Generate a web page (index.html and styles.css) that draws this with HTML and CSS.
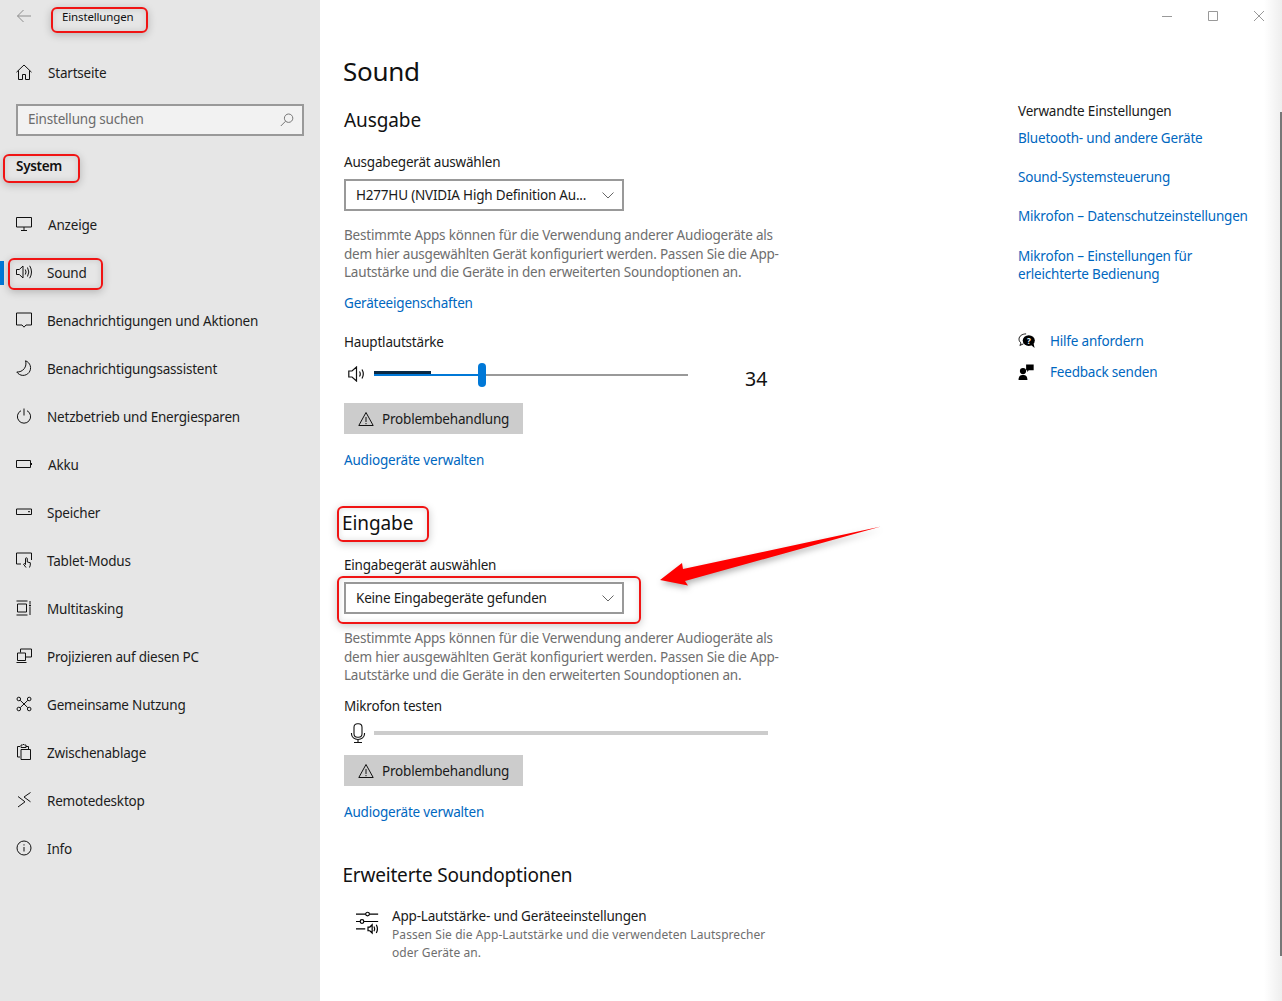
FILE: index.html
```html
<!DOCTYPE html>
<html lang="de">
<head>
<meta charset="utf-8">
<title>Einstellungen - Sound</title>
<link rel="stylesheet" href="styles.css">
</head>
<body>
<div class="window">
  <aside class="sidebar">
    <div class="titlebar">
      <svg class="back" width="16" height="16" viewBox="0 0 16 16"><path d="M15 8H1.500M7.500 2 1.500 8l6 6"/></svg>
      <span class="apptitle">Einstellungen</span>
    </div>
    <div class="row home">
      <svg class="ico" viewBox="0 0 16 16"><path d="M.5 8.200 8 1l7.500 7.200M2.500 6.500v9h4v-5h3v5h4v-9"/></svg>
      <span class="lbl wide">Startseite</span>
    </div>
    <div class="search">
      <span class="search-text">Einstellung suchen</span>
      <svg class="search-ico" viewBox="0 0 14 14"><circle cx="8.600" cy="5.200" r="4.200"/><path d="M5.600 8.200.8 13"/></svg>
    </div>
    <div class="group">System</div>
    <nav class="nav">
      <div class="row">
        <svg class="ico" viewBox="0 0 16 16"><path d="M.5 1.500h15v9.500H.5zM8 11v3M5 14.500h6"/></svg>
        <span class="lbl wide">Anzeige</span>
      </div>
      <div class="row active">
        <svg class="ico" viewBox="0 0 16 16"><path d="M.5 5.500h2.800L7 2v12l-3.700-3.500H.5zM9.300 5.500q1.500 2.500 0 5M11.500 3.500q2.600 4.500 0 9M13.700 1.800q3.600 6.200 0 12.400"/></svg>
        <span class="lbl">Sound</span>
      </div>
      <div class="row">
        <svg class="ico" viewBox="0 0 16 16"><path d="M.5 1h15v12H10l-2 2.200L6 13H.5z"/></svg>
        <span class="lbl">Benachrichtigungen und Aktionen</span>
      </div>
      <div class="row">
        <svg class="ico" viewBox="0 0 16 16"><path d="M9.500.8A7.500 7.500 0 1 1 .8 12 8.500 8.500 0 0 0 9.500.8z"/></svg>
        <span class="lbl">Benachrichtigungsassistent</span>
      </div>
      <div class="row">
        <svg class="ico" viewBox="0 0 16 16"><path d="M8 .5v7M5 2.700a6.600 6.600 0 1 0 6 0"/></svg>
        <span class="lbl">Netzbetrieb und Energiesparen</span>
      </div>
      <div class="row">
        <svg class="ico" viewBox="0 0 16 16"><path d="M.5 4.500h14v7H.5zM15.500 7v2"/></svg>
        <span class="lbl wide">Akku</span>
      </div>
      <div class="row">
        <svg class="ico" viewBox="0 0 16 16"><path d="M.5 5h15v5.500H.5zM12 7.700h2"/></svg>
        <span class="lbl">Speicher</span>
      </div>
      <div class="row">
        <svg class="ico" viewBox="0 0 16 16"><path d="M5 12H.5V1h15v7M10 15.500l-2.500-3.300 1-.7 1 1V6.700a.9.9 0 0 1 1.800 0V10l3 .7v2.500l-.8 2.300"/></svg>
        <span class="lbl">Tablet-Modus</span>
      </div>
      <div class="row">
        <svg class="ico" viewBox="0 0 16 16"><path d="M.5 1h11M.5 15h11M1.500 4h9v8h-9zM14 1v3M14 7v8"/><circle cx="14" cy="5.500" r="1" class="solid"/></svg>
        <span class="lbl">Multitasking</span>
      </div>
      <div class="row">
        <svg class="ico" viewBox="0 0 16 16"><path d="M4.500 4.500V1h11v8H10M1.500 5h8v7.500h-8zM.5 14.500h10"/></svg>
        <span class="lbl">Projizieren auf diesen PC</span>
      </div>
      <div class="row">
        <svg class="ico" viewBox="0 0 16 16"><circle cx="2.800" cy="3" r="1.800"/><circle cx="13.200" cy="3" r="1.800"/><circle cx="2.800" cy="13" r="1.800"/><circle cx="13.200" cy="13" r="1.800"/><path d="m4.200 4.300 7.600 7.400M11.800 4.300l-7.600 7.400"/></svg>
        <span class="lbl">Gemeinsame Nutzung</span>
      </div>
      <div class="row">
        <svg class="ico" viewBox="0 0 16 16"><path d="M4 13H1.500V2.500H4M10 2.500h2.500V5M5 2.500V1h1.500l.5-.5h1l.5.500H10v2.500H5zM5 5.500h9.500v10H5z"/></svg>
        <span class="lbl">Zwischenablage</span>
      </div>
      <div class="row">
        <svg class="ico" viewBox="0 0 16 16"><path d="M2 4.500 9 9.800 2 15M14.500.5 8 5l6.500 4.800"/></svg>
        <span class="lbl">Remotedesktop</span>
      </div>
      <div class="row">
        <svg class="ico" viewBox="0 0 16 16"><circle cx="8" cy="8" r="7"/><path d="M8 7v4.500M8 4.300v1.200"/></svg>
        <span class="lbl">Info</span>
      </div>
    </nav>
  </aside>

  <main class="main">
    <div class="content">
      <h1 class="page-title">Sound</h1>

      <h2 class="section first">Ausgabe</h2>
      <div class="label first-label">Ausgabegerät auswählen</div>
      <div class="select">
        <span>H277HU (NVIDIA High Definition Au...</span>
        <svg class="chev" viewBox="0 0 12 7"><path d="M.5.500 6 6 11.500.500"/></svg>
      </div>
      <p class="desc">Bestimmte Apps können für die Verwendung anderer Audiogeräte als dem hier ausgewählten Gerät konfiguriert werden. Passen Sie die App-Lautstärke und die Geräte in den erweiterten Soundoptionen an.</p>
      <a class="link after-desc">Geräteeigenschaften</a>
      <div class="label volume-label">Hauptlautstärke</div>
      <div class="volume">
        <svg class="vol-ico" viewBox="0 0 18 16"><path d="M.8 5h3.200L8.500 1v14L4 11H.8zM11.500 5.500q1.600 2.500 0 5M14 3.500q2.600 4.500 0 9"/></svg>
        <div class="slider">
          <div class="peak"></div>
          <div class="fill"></div>
          <div class="thumb"></div>
        </div>
        <div class="vol-value">34</div>
      </div>
      <div class="button">
        <svg class="warn" viewBox="0 0 16 16"><path d="M8 1.500 15.200 14.500H.8zM8 6v5M8 12v1.200"/></svg>
        <span>Problembehandlung</span>
      </div>
      <a class="link after-btn">Audiogeräte verwalten</a>

      <h2 class="section second">Eingabe</h2>
      <div class="label first-label">Eingabegerät auswählen</div>
      <div class="select">
        <span>Keine Eingabegeräte gefunden</span>
        <svg class="chev" viewBox="0 0 12 7"><path d="M.5.500 6 6 11.500.500"/></svg>
      </div>
      <p class="desc">Bestimmte Apps können für die Verwendung anderer Audiogeräte als dem hier ausgewählten Gerät konfiguriert werden. Passen Sie die App-Lautstärke und die Geräte in den erweiterten Soundoptionen an.</p>
      <div class="label mic-label">Mikrofon testen</div>
      <div class="mic">
        <svg class="mic-ico" viewBox="0 0 16 20"><rect x="4" y=".7" width="8" height="13.500" rx="3.500"/><path d="M1.500 10v1a6.500 5.500 0 0 0 13 0v-1M8 16.500v3M4 19.500h8"/></svg>
        <div class="meter"></div>
      </div>
      <div class="button mic-btn">
        <svg class="warn" viewBox="0 0 16 16"><path d="M8 1.500 15.200 14.500H.8zM8 6v5M8 12v1.200"/></svg>
        <span>Problembehandlung</span>
      </div>
      <a class="link after-btn">Audiogeräte verwalten</a>

      <h2 class="section second tight">Erweiterte Soundoptionen</h2>
      <div class="advanced">
        <svg class="adv-ico" viewBox="0 0 26 24"><path d="M0 4h10.500M14.500 4H24M0 12h4.500M8.500 12H24M0 20h10"/><circle cx="12.500" cy="4" r="2"/><circle cx="6.500" cy="12" r="2"/><path d="M13 18h2l2.500-2.500v9L15 22h-2zM19.500 17.500q1.400 2.500 0 5M22 15.500q2.400 4.500 0 9"/></svg>
        <div>
          <div class="adv-title">App-Lautstärke- und Geräteeinstellungen</div>
          <div class="adv-desc">Passen Sie die App-Lautstärke und die verwendeten Lautsprecher oder Geräte an.</div>
        </div>
      </div>
    </div>

    <aside class="related">
      <div class="rel-title">Verwandte Einstellungen</div>
      <a class="link rel-link">Bluetooth- und andere Geräte</a>
      <a class="link rel-link">Sound-Systemsteuerung</a>
      <a class="link rel-link">Mikrofon – Datenschutzeinstellungen</a>
      <a class="link rel-link">Mikrofon – Einstellungen für erleichterte Bedienung</a>
      <div class="help first-help">
        <svg class="help-ico" viewBox="0 0 20 18"><path class="thin" d="M9 1C4.500 1 1 3.500 1 7c0 1.800 1 3.200 2.300 4.200L2 14l4-1.800"/><ellipse cx="12" cy="8.500" rx="6.800" ry="6" class="solid"/><path class="solid" d="m14 13 4.500 4-1-5z"/><text x="12" y="12" class="q">?</text></svg>
        <a class="link">Hilfe anfordern</a>
      </div>
      <div class="help">
        <svg class="help-ico" viewBox="0 0 20 18"><circle cx="5.500" cy="8" r="3.500" class="solid"/><path class="solid" d="M.5 18c0-4 2-5.500 5-5.500s5 1.500 5 5.500zM9 .5h8.500v6.500H12l-1.800 2V7H9z"/></svg>
        <a class="link">Feedback senden</a>
      </div>
    </aside>

    <div class="winctl">
      <svg width="12" height="12" viewBox="0 0 12 12"><path d="M1 6.500h10"/></svg>
      <svg width="12" height="12" viewBox="0 0 12 12"><path d="M1.500 1.500h9v9h-9z"/></svg>
      <svg width="12" height="12" viewBox="0 0 12 12"><path d="M1 1l10 10M11 1 1 11"/></svg>
    </div>
    <div class="scrollbar"><div class="scroll-thumb"></div></div>
  </main>

  <div class="mark m-title"></div>
  <div class="mark m-system"></div>
  <div class="mark m-sound"></div>
  <div class="mark m-eingabe"></div>
  <div class="mark m-select"></div>
  <svg class="arrow" width="240" height="75" viewBox="650 520 240 75"><path d="M881 526.500 683 569 682 563 660 580 688 585.500 685 581z"/></svg>
</div>
</body>
</html>
```

FILE: styles.css
```css
* { box-sizing: border-box; }
html, body { margin: 0; height: 100%; }
body { font-family: "Noto Sans", "Open Sans", sans-serif; font-size: 13.5px; letter-spacing: -.2px; color: #1a1a1a; background: #fff; overflow: hidden; }
svg { fill: none; stroke: #111; stroke-width: 1; flex: none; }
svg .solid { fill: #000; stroke: none; }
.window { position: relative; display: flex; width: 1282px; height: 1001px; overflow: hidden; }

.sidebar { width: 320px; flex: none; background: #e6e6e6; }
.titlebar { display: flex; align-items: center; height: 32px; padding-left: 16px; }
.back { stroke: #8e8e8e; }
.apptitle { margin-left: 30px; font-size: 11.5px; letter-spacing: -.15px; color: #111; }
.row { position: relative; display: flex; align-items: center; height: 48px; padding-left: 16px; }
.row .ico { position: relative; top: -1px; }
.home { margin-top: 17px; }
.ico { width: 16px; height: 16px; }
.lbl { margin-left: 15px; color: #1c1c1c; }
.wide { margin-left: 16px; }
.active::before { content: ""; position: absolute; left: 0; top: 12px; width: 4px; height: 24px; background: #0078d7; }
.search { display: flex; align-items: center; justify-content: space-between; height: 32px; width: 288px; margin: 7px 0 0 16px; padding: 0 8px 2px 10px; background: #f2f2f2; border: 2px solid #999; color: #6b6b6b; }
.search-ico { width: 14px; height: 14px; stroke: #777; margin-top: 2px; }
.group { margin: 16px 0 0 16px; height: 28px; line-height: 29px; font-weight: 600; color: #111; letter-spacing: -.3px; }
.nav { margin-top: 21px; }

.main { position: relative; flex: 1; display: flex; background: #fff; }
.content { width: 698px; padding: 52px 0 0 24px; flex: none; }
.page-title { margin: 0 0 0 -1px; font-size: 26px; line-height: 38px; padding-bottom: 2px; font-weight: 400; letter-spacing: -.3px; color: #111; }
.section { margin: 0; font-size: 19px; line-height: 28px; font-weight: 400; letter-spacing: -.1px; color: #111; }
.first { margin-top: 14px; }
.second { margin-top: 39px; margin-left: -2px; }
.tight { margin-left: -1.500px; letter-spacing: -.2px; }
.label { line-height: 20px; }
.first-label { margin-top: 18px; }
.select { display: flex; align-items: center; justify-content: space-between; width: 280px; height: 32px; margin-top: 7px; padding: 0 8px 0 10px; background: #fff; border: 2px solid #999; white-space: nowrap; }
.chev { width: 12px; height: 7px; stroke: #666; }
.desc { width: 440px; margin: 15px 0 0; line-height: 18.500px; color: #6e6e6e; }
.link { display: block; line-height: 20px; color: #0067c0; text-decoration: none; }
.after-desc { margin-top: 11.500px; }
.volume-label { margin-top: 19px; }
.volume { display: flex; align-items: center; height: 30px; margin-top: 7px; padding-left: 4px; }
.vol-ico { width: 18px; height: 16px; stroke-width: 1.200; }
.slider { position: relative; width: 314px; height: 24px; margin-left: 8px; }
.slider::after { content: ""; position: absolute; left: 0; right: 0; top: 12px; height: 2px; background: #999; }
.fill { position: absolute; z-index: 1; left: 0; top: 12px; width: 108px; height: 2px; background: #0078d7; }
.peak { position: absolute; z-index: 2; left: 0; top: 9px; width: 57px; height: 3px; background: #0a2a45; }
.thumb { position: absolute; z-index: 3; left: 104px; top: 1px; width: 8px; height: 24px; border-radius: 4px; background: #0078d7; }
.vol-value { margin: 8px 0 0 57px; font-size: 19.500px; letter-spacing: 0; color: #111; }
.button { display: flex; align-items: center; gap: 8px; width: 179px; height: 31px; margin-top: 14px; padding-left: 14px; background: #ccc; }
.mic-btn { margin-top: 9px; }
.warn { width: 16px; height: 16px; }
.after-btn { margin-top: 16px; }
.mic-label { margin-top: 11.500px; }
.mic { display: flex; align-items: center; height: 26px; margin-top: 4px; padding-left: 6px; }
.mic-ico { width: 16px; height: 20px; stroke-width: 1.100; }
.meter { width: 394px; height: 4px; margin-left: 8px; background: #ccc; }
.advanced { display: flex; gap: 12px; margin: 17px 0 0 12px; }
.adv-ico { width: 24px; height: 25px; margin-top: 3px; stroke-width: 1.300; stroke: #000; overflow: visible; }
.adv-title { line-height: 20px; }
.adv-desc { width: 390px; font-size: 12px; line-height: 18px; letter-spacing: .07px; color: #6e6e6e; }

.related { width: 250px; padding-top: 101px; }
.rel-title { line-height: 20px; }
.rel-link { max-width: 232px; margin-top: 8px; line-height: 18.500px; }
.rel-link + .rel-link { margin-top: 20.500px; }
.rel-link:nth-of-type(4) { margin-top: 21px; }
.help { display: flex; align-items: center; height: 20px; gap: 14px; margin-top: 11px; }
.first-help { margin-top: 47.500px; }
.help-ico { width: 18px; height: 16px; }
.help-ico .thin { stroke: #000; }
.q { font-size: 9px; font-weight: 700; fill: #fff; stroke: none; text-anchor: middle; }

.winctl { position: absolute; top: 10px; right: 17px; display: flex; gap: 34px; }
.winctl svg { stroke: #999; }
.scrollbar { position: absolute; top: 0; right: 0; bottom: 0; width: 18px; background: linear-gradient(to right, #fff, #eee); }
.scroll-thumb { position: absolute; left: 16px; top: 112px; width: 2px; height: 844px; background: #777; }

.mark { position: absolute; border: 2px solid #f01414; border-radius: 6px; box-shadow: 0 2px 8px rgba(0,0,0,.22), inset 0 0 6px rgba(0,0,0,.12); pointer-events: none; }
.m-title { left: 51px; top: 7px; width: 97px; height: 26px; }
.m-system { left: 3px; top: 154px; width: 77px; height: 29px; }
.m-sound { left: 8px; top: 258px; width: 95px; height: 32px; }
.m-eingabe { left: 337px; top: 506px; width: 92px; height: 36px; }
.m-select { left: 337px; top: 576px; width: 304px; height: 48px; }
.arrow { position: absolute; left: 650px; top: 520px; stroke: none; overflow: visible; filter: drop-shadow(1px 3px 3px rgba(0,0,0,.3)); }
.arrow path { fill: #f00; stroke: none; }
```
